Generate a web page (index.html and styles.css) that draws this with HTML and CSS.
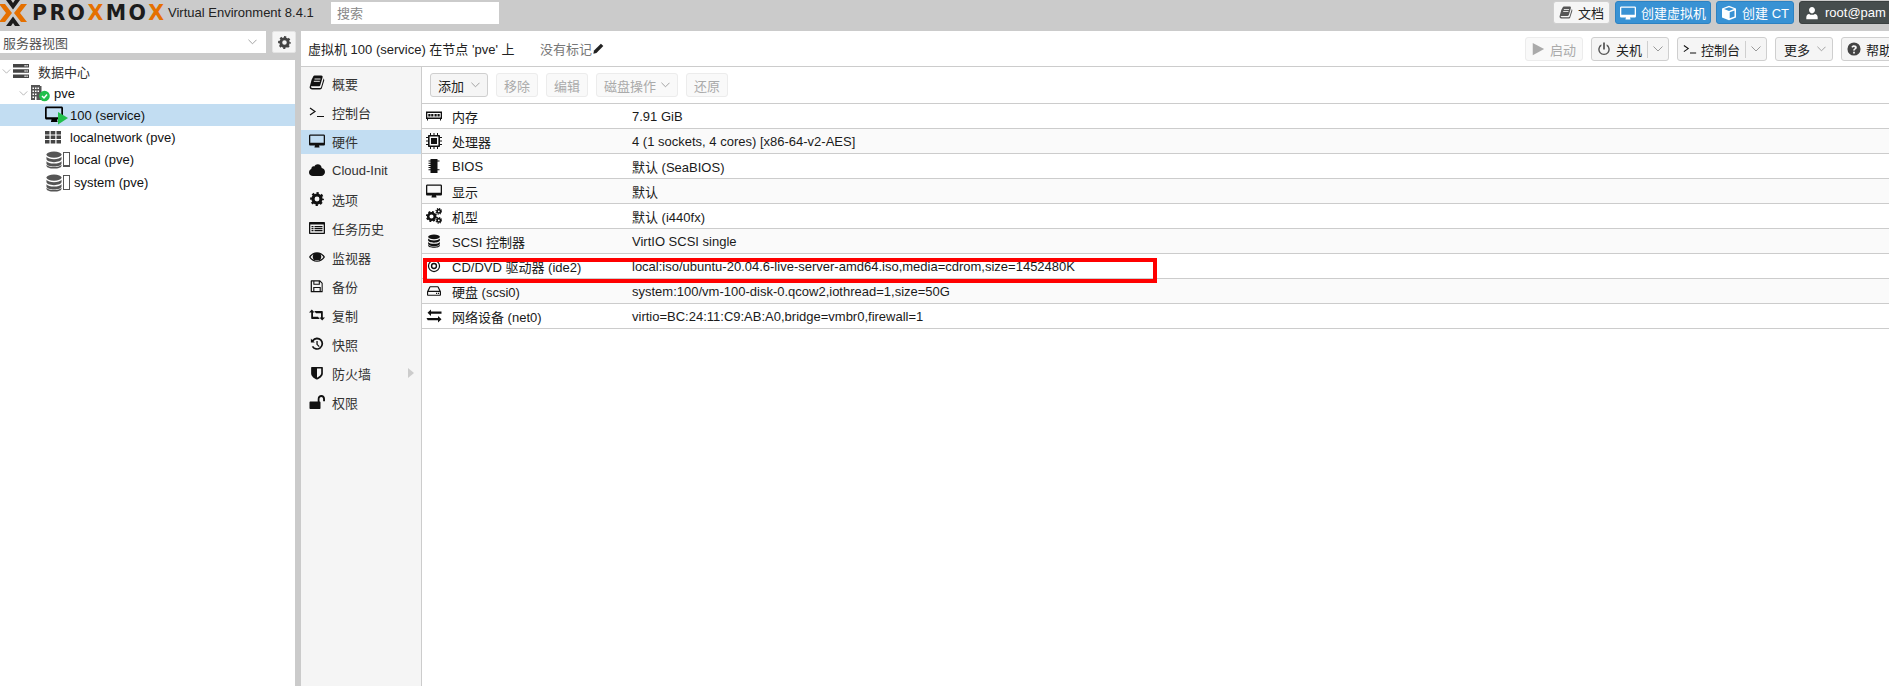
FILE: index.html
```html
<!DOCTYPE html>
<html lang="zh-CN">
<head>
<meta charset="utf-8">
<title>Proxmox VE</title>
<link rel="stylesheet" href="styles.css">
</head>
<body>
<svg class="defs" width="0" height="0">
  <symbol id="i-book" viewBox="0 0 16 16"><path d="M15 4.200c.3.4.3.9.2 1.400l-2.400 7.600c-.2.7-.9 1.200-1.700 1.200H3c-.9 0-1.900-.7-2.300-1.600-.1-.4-.1-.7 0-1 .2-1 1.300-4.800 1.700-6.400 0-.3.1-.5.2-.7L4.500 1.100C4.700.7 5.200.4 5.700.5L12.300.5c.5 0 .9.2 1.100.5.3.4.3.9.2 1.300l-2.200 7.500c-.4 1.200-.6 1.500-1.700 1.500H2.400c-.2 0-.3 0-.4.200-.1.100-.1.300 0 .5.2.6.8.9 1.300.9h7.900c.3 0 .7-.2.8-.5l2.500-8.300c.1-.2 0-.5 0-.7.2.1.4.2.5.3z"/><path d="M5.500 4h6M4.800 6.300h6" stroke="#fff" stroke-width=".9"/></symbol>
  <symbol id="i-term" viewBox="0 0 16 16"><path d="M1 4l5 3.500L1 11M8 12.500h7" fill="none" stroke="currentColor" stroke-width="1.200"/></symbol>
  <symbol id="i-desk" viewBox="0 0 16 16"><path d="M1.300 1.500h13.400c.7 0 1.300.6 1.300 1.300v8.400c0 .7-.6 1.300-1.300 1.300H10c0 .8.500 1 .5 1.500v.5H5.500V14c0-.5.500-.7.500-1.500H1.300c-.7 0-1.300-.6-1.300-1.300V2.800c0-.7.600-1.300 1.300-1.300zm0 1.300v7h13.400v-7z"/></symbol>
  <symbol id="i-cloud" viewBox="0 0 16 16"><path d="M4 14c-2.200 0-4-1.600-4-3.600 0-1.500 1-2.800 2.300-3.300C2.300 4.900 4 3.800 5.300 4.500 6 3 7.400 2.300 8.700 2.300c2.200 0 3.900 1.700 4 3.800 1.900.4 3.300 1.900 3.300 3.900 0 2.200-1.800 4-4 4z"/></symbol>
  <symbol id="i-cog" viewBox="0 0 16 16"><circle cx="8" cy="8" r="4.600" fill="none" stroke="currentColor" stroke-width="3.600"/><circle cx="8" cy="8" r="6.600" fill="none" stroke="currentColor" stroke-width="2.600" stroke-dasharray="2.600 2.580" stroke-dashoffset="1.300"/></symbol>
  <symbol id="i-list" viewBox="0 0 16 16"><path fill-rule="evenodd" d="M1 2h14c.6 0 1 .4 1 1v10c0 .6-.4 1-1 1H1c-.6 0-1-.4-1-1V3c0-.6.4-1 1-1zm.3 2.500v8.200h13.400V4.500z"/><path d="M2.500 6h2v1.200h-2zM5.500 6h8v1.200h-8zM2.500 8h2v1.200h-2zM5.500 8h8v1.200h-8zM2.500 10h2v1.200h-2zM5.500 10h8v1.200h-8z"/></symbol>
  <symbol id="i-eye" viewBox="0 0 16 16"><path fill-rule="evenodd" d="M0 8c1.700-3 4.600-4.800 8-4.800s6.300 1.800 8 4.800c-1.700 3-4.600 4.800-8 4.800S1.700 11 0 8zm1.500 0C3 10.200 5.300 11.600 8 11.600s5-1.400 6.500-3.600c-.8-1.200-1.800-2.100-3-2.800.5.700.8 1.600.8 2.600 0 2.400-1.900 4.300-4.300 4.300S3.700 10.200 3.700 7.800c0-1 .3-1.900.8-2.600-1.200.7-2.200 1.600-3 2.800z"/></symbol>
  <symbol id="i-save" viewBox="0 0 16 16"><path fill-rule="evenodd" d="M1.500 1.500h10l3 3v10c0 .4-.3.700-.7.700H1.500c-.4 0-.7-.3-.7-.7V2.200c0-.4.3-.7.7-.7zM2.200 2.800v11h1.500V9h8.600v4.800h1V5l-2-2v3.700H3.800V2.800zm2.800 0v2.700h5V2.800zm0 7.500v3.500h6v-3.500z"/></symbol>
  <symbol id="i-retweet" viewBox="0 0 16 16"><path d="M0 5.500L2.800 2.500 5.600 5.500H4v4.200h5l1.800 2.300H2.900c-.3 0-.7-.3-.7-.7V5.500zM16 10.500l-2.800 3-2.800-3H12V6.300H7L5.200 4h7.900c.3 0 .7.300.7.700v5.800z"/></symbol>
  <symbol id="i-hist" viewBox="0 0 16 16"><path d="M2.500 3.300A7 7 0 1 1 2 11.200l1.700-1A5 5 0 1 0 4 4.800L5.500 6.300H1V1.800z"/><path d="M7.300 4.500h1.500v3.700l2.300 2.300-1 1-2.800-2.800z"/></symbol>
  <symbol id="i-shield" viewBox="0 0 16 16"><path fill-rule="evenodd" d="M2 1h12c.4 0 .7.300.7.700V8.500c0 3.200-3.500 5.700-6.700 7-3.200-1.300-6.700-3.800-6.700-7V1.700c0-.4.300-.7.700-.7zm6 1.800v10.500c2.200-1 4.800-2.800 4.800-4.900V2.800z"/></symbol>
  <symbol id="i-unlock" viewBox="0 0 16 16"><path d="M1.500 7.500h7.200V5c0-2.400 1.700-4 3.700-4s3.600 1.600 3.600 4v2.200h-1.900V5c0-1.200-.8-2.100-1.800-2.100s-1.800.9-1.800 2.100v2.500c.6 0 1 .4 1 1V14c0 .6-.4 1-1 1H1.500c-.6 0-1-.4-1-1V8.500c0-.6.400-1 1-1z"/></symbol>
  <symbol id="i-mem" viewBox="0 0 16 16"><path fill-rule="evenodd" d="M0 3.500h16v7.500h-1v1.500h-1V11H2v1.500H1V11H0zM1.300 5v4.500h13.400V5z"/><path d="M2.300 6h2.200v2.500H2.300zM5.200 6h2.200v2.500H5.200zM8.500 6h2.200v2.500H8.500zM11.500 6h2.200v2.500h-2.200z"/></symbol>
  <symbol id="i-cpu" viewBox="0 0 16 16"><path fill-rule="evenodd" d="M3 2h10c.6 0 1 .4 1 1v10c0 .6-.4 1-1 1H3c-.6 0-1-.4-1-1V3c0-.6.400-1 1-1zm.6 1.600v8.800h8.800V3.600z"/><path d="M5 5h6v6H5zM4 0h1v2H4zM7.500 0h1v2h-1zM11 0h1v2h-1zM4 14h1v2H4zM7.500 14h1v2h-1zM11 14h1v2h-1zM0 4h2v1H0zM0 7.500h2v1H0zM0 11h2v1H0zM14 4h2v1h-2zM14 7.500h2v1h-2zM14 11h2v1h-2z"/></symbol>
  <symbol id="i-chip" viewBox="0 0 16 16"><path d="M4.500 1h7v14h-7zM2.500 2.500h2v1h-2zM2.500 4.700h2v1h-2zM2.500 6.900h2v1h-2zM2.500 9.100h2v1h-2zM2.500 11.300h2v1h-2zM11.500 2.500h2v1h-2zM11.500 11.300h2v1h-2z"/></symbol>
  <symbol id="i-cogs" viewBox="0 0 16 16"><circle cx="5.500" cy="8.500" r="3.300" fill="none" stroke="currentColor" stroke-width="2.500"/><circle cx="5.500" cy="8.500" r="4.700" fill="none" stroke="currentColor" stroke-width="1.800" stroke-dasharray="1.900 1.790"/><circle cx="12.800" cy="3.300" r="1.700" fill="none" stroke="currentColor" stroke-width="1.600"/><circle cx="12.800" cy="3.300" r="2.800" fill="none" stroke="currentColor" stroke-width="1.200" stroke-dasharray="1.100 1.100"/><circle cx="12.800" cy="12.300" r="1.700" fill="none" stroke="currentColor" stroke-width="1.600"/><circle cx="12.800" cy="12.300" r="2.800" fill="none" stroke="currentColor" stroke-width="1.200" stroke-dasharray="1.100 1.100"/></symbol>
  <symbol id="i-db" viewBox="0 0 16 16"><ellipse cx="8" cy="3.200" rx="6.700" ry="2.700"/><path d="M1.300 5.200v2c0 1.500 3 2.700 6.700 2.700s6.700-1.200 6.700-2.700v-2c-1 1.500-3.500 2.100-6.700 2.100S2.300 6.700 1.300 5.200zM1.300 9v2c0 1.500 3 2.700 6.700 2.700s6.700-1.200 6.700-2.700V9c-1 1.500-3.500 2.100-6.700 2.100S2.300 10.500 1.300 9z"/><path d="M1.300 12.200v.8c0 1.500 3 2.600 6.700 2.600s6.700-1.100 6.700-2.600v-.8c-1 1.400-3.500 2.100-6.700 2.100s-5.700-.7-6.700-2.100z"/></symbol>
  <symbol id="i-cd" viewBox="0 0 16 16"><circle cx="8" cy="8" r="6.300" fill="none" stroke="currentColor" stroke-width="1.400"/><circle cx="8" cy="8" r="2.800" fill="none" stroke="currentColor" stroke-width="1.600"/></symbol>
  <symbol id="i-hdd" viewBox="0 0 16 16"><path fill-rule="evenodd" d="M3.700 2.500h8.600c.4 0 .8.200 1 .6l2.500 5.200c.1.200.2.400.2.600v3.300c0 .7-.6 1.300-1.300 1.300H1.300c-.7 0-1.300-.6-1.300-1.300V8.900c0-.2.100-.4.200-.6l2.500-5.200c.2-.4.600-.6 1-.6zm.2 1.300L2 7.700h12l-1.900-3.900zM1.300 9v3.200h13.400V9z"/><path d="M10.300 10h1.300v1.300h-1.300zM12.500 10h1.300v1.300h-1.300z"/></symbol>
  <symbol id="i-swap" viewBox="0 0 16 16"><path d="M0 10h11.500V8L15 11.200 11.500 14.500v-2.200H1.200zM15 3.500v2.300H4.500V8L1 4.800 4.500 1.500v2z" transform="translate(.5 0)"/></symbol>
  <symbol id="i-user" viewBox="0 0 16 16"><path d="M8 1c2 0 3.400 1.700 3.400 3.700S10 8.500 8 8.500 4.600 6.700 4.600 4.700 6 1 8 1zM1.500 15v-2.200c0-2 1.300-3.600 3.200-3.800.9.600 2 1 3.300 1s2.400-.4 3.300-1c1.900.2 3.200 1.800 3.200 3.800V15z"/></symbol>
  <symbol id="i-cube" viewBox="0 0 16 16"><path d="M8 .8l7 2.700v9L8 15.300l-7-2.800v-9zM3 4l5 2 5-2-5-1.800zM8.700 7.300v6l4.800-1.900V5.400z"/></symbol>
  <symbol id="i-play" viewBox="0 0 16 16"><path d="M2 1l13 7-13 7z"/></symbol>
  <symbol id="i-power" viewBox="0 0 16 16"><path d="M5 2.500v2a5 5 0 1 0 6 0v-2a6.600 6.600 0 1 1-6 0z"/><path d="M7 .5h2v8H7z"/></symbol>
  <symbol id="i-help" viewBox="0 0 16 16"><path fill-rule="evenodd" d="M8 .5a7.500 7.500 0 1 1 0 15 7.500 7.500 0 0 1 0-15zM7 11v2h2v-2zM5 5.800l1.400.9C6.700 6 7.200 5.600 7.900 5.600c.6 0 1.100.4 1.100.9 0 .5-.3.800-.9 1.100-.7.400-1.100 1-1.100 1.800v.4h2v-.3c0-.4.200-.6.700-.9.800-.4 1.500-1.100 1.500-2.200C11.200 4.700 9.700 3.700 8 3.700c-1.400 0-2.400.7-3 2.100z"/></symbol>
  <symbol id="i-pencil" viewBox="0 0 16 16"><path d="M11.500 1l3.500 3.500L5 14.500 0.500 15.500 1.500 11z"/></symbol>
  <symbol id="i-servers" viewBox="0 0 16 16"><path fill-rule="evenodd" d="M0 1h16v3.600H0zM0 6.200h16v3.600H0zM0 11.400h16V15H0z"/><path fill="#fff" d="M11.500 2h1.200v1.400h-1.200zM13.500 2h1.200v1.400h-1.200zM11.500 7.300h1.200v1.400h-1.200zM13.500 7.300h1.200v1.400h-1.200zM11.500 12.500h1.200v1.400h-1.200zM13.500 12.500h1.200v1.400h-1.200z"/></symbol>
  <symbol id="i-th" viewBox="0 0 16 16"><path d="M0 2h4.500v3.400H0zM5.700 2h4.600v3.400H5.700zM11.500 2H16v3.400h-4.500zM0 6.500h4.500v3.400H0zM5.700 6.500h4.600v3.400H5.700zM11.500 6.500H16v3.400h-4.500zM0 11h4.500v3.400H0zM5.700 11h4.600v3.400H5.700zM11.500 11H16v3.400h-4.500z"/></symbol>
  <symbol id="i-chev" viewBox="0 0 10 6"><path d="M.5.500L5 5 9.500.5" fill="none" stroke="currentColor" stroke-width="1"/></symbol>
</svg>

<div class="app">
  <header class="topbar">
    <div class="logo">
      <svg class="logo-mark" viewBox="0 0 28 26" width="28" height="26"><path fill="#e57000" d="M0 4h6l7 9-7 9H0l7-9zM28 4h-6l-7 9 7 9h6l-7-9z"/><path fill="#1c1c1c" d="M7 0h5l2 3 2-3h5l-7 9.500zM7 26h5l2-3 2 3h5l-7-9.500z"/></svg>
      <span class="logo-text">PRO<b>X</b>MO<b>X</b></span>
    </div>
    <span class="version">Virtual Environment 8.4.1</span>
    <input class="search" type="text" placeholder="搜索">
    <div class="top-tools">
      <button class="btn top-btn"><svg class="ico dim"><use href="#i-book"/></svg>文档</button>
      <button class="btn top-btn blue"><svg class="ico"><use href="#i-desk"/></svg>创建虚拟机</button>
      <button class="btn top-btn blue"><svg class="ico"><use href="#i-cube"/></svg>创建 CT</button>
      <button class="btn top-btn dark"><svg class="ico"><use href="#i-user"/></svg>root@pam</button>
    </div>
  </header>

  <div class="main">
    <aside class="side">
      <div class="view-row">
        <div class="combo"><span>服务器视图</span><svg class="chev"><use href="#i-chev"/></svg></div>
        <button class="gear-btn"><svg class="ico"><use href="#i-cog"/></svg></button>
      </div>
      <div class="tree">
        <div class="tree-row l0"><svg class="chev tw"><use href="#i-chev"/></svg><svg class="ico srv"><use href="#i-servers"/></svg><span class="dc-label">数据中心</span></div>
        <div class="tree-row l1"><svg class="chev tw"><use href="#i-chev"/></svg>
          <svg class="node-ico" viewBox="0 0 20 18" width="20" height="18"><path fill="#555" d="M1 1h9v1h1.500v14H1z"/><path fill="#fff" d="M2.500 3.500h1.500v1.500H2.500zM5 3.500h1.500v1.500H5zM7.500 3.500H9v1.500H7.500zM2.500 6.500h1.500V8H2.500zM5 6.500h1.500V8H5zM7.500 6.500H9V8H7.500zM2.500 9.500h1.500V11H2.500zM5 9.500h1.500V11H5zM2.500 12.500h1.500V14H2.500zM5 12.500h1.500V16H5z"/><circle cx="14.500" cy="12" r="5.300" fill="#21bf4b"/><path d="M12 12l2 2 3-3.500" fill="none" stroke="#fff" stroke-width="1.500"/></svg>
          <span class="node-label">pve</span></div>
        <div class="tree-row l2 selected">
          <svg class="vm-ico" viewBox="0 0 24 20" width="24" height="20"><path fill-rule="evenodd" d="M1.500 1.500h15c.8 0 1.500.7 1.500 1.500v10c0 .8-.7 1.500-1.500 1.500H12c0 1 .5 1 .5 2v.5H6v-.5c0-1 .5-1 .5-2h-5C.700 14.500 0 13.800 0 13V3c0-.8.700-1.500 1.500-1.500zm.2 1.700v9h14.600v-9z"/><path fill="#21bf4b" d="M13 7l10 6-10 6.500z"/></svg>
          <span>100 (service)</span></div>
        <div class="tree-row l2"><svg class="ico th"><use href="#i-th"/></svg><span class="net-label">localnetwork (pve)</span></div>
        <div class="tree-row l2 tall"><svg class="ico db"><use href="#i-db"/></svg><span class="gauge low"></span><span>local (pve)</span></div>
        <div class="tree-row l2 tall"><svg class="ico db"><use href="#i-db"/></svg><span class="gauge"></span><span>system (pve)</span></div>
      </div>
    </aside>

    <section class="panel">
      <div class="panel-head">
        <span class="title">虚拟机 100 (service) 在节点 'pve' 上</span>
        <span class="tags">没有标记<svg class="pencil"><use href="#i-pencil"/></svg></span>
        <div class="head-tools">
          <button class="btn off start"><svg class="ico"><use href="#i-play"/></svg>启动</button>
          <button class="btn"><svg class="ico power"><use href="#i-power"/></svg>关机<span class="split"></span><svg class="chev"><use href="#i-chev"/></svg></button>
          <button class="btn console"><svg class="ico"><use href="#i-term"/></svg>控制台<span class="split"></span><svg class="chev"><use href="#i-chev"/></svg></button>
          <button class="btn more">更多<svg class="chev after"><use href="#i-chev"/></svg></button>
          <button class="btn"><svg class="ico help"><use href="#i-help"/></svg>帮助</button>
        </div>
      </div>
      <div class="panel-body">
        <nav class="nav">
          <a class="nav-item"><svg class="ico"><use href="#i-book"/></svg>概要</a>
          <a class="nav-item"><svg class="ico"><use href="#i-term"/></svg>控制台</a>
          <a class="nav-item active"><svg class="ico"><use href="#i-desk"/></svg>硬件</a>
          <a class="nav-item"><svg class="ico"><use href="#i-cloud"/></svg>Cloud-Init</a>
          <a class="nav-item"><svg class="ico small"><use href="#i-cog"/></svg>选项</a>
          <a class="nav-item"><svg class="ico"><use href="#i-list"/></svg>任务历史</a>
          <a class="nav-item"><svg class="ico"><use href="#i-eye"/></svg>监视器</a>
          <a class="nav-item"><svg class="ico small"><use href="#i-save"/></svg>备份</a>
          <a class="nav-item"><svg class="ico"><use href="#i-retweet"/></svg>复制</a>
          <a class="nav-item"><svg class="ico small"><use href="#i-hist"/></svg>快照</a>
          <a class="nav-item"><svg class="ico small"><use href="#i-shield"/></svg>防火墙<span class="nav-arrow"></span></a>
          <a class="nav-item"><svg class="ico"><use href="#i-unlock"/></svg>权限</a>
        </nav>
        <div class="content">
          <div class="toolbar">
            <button class="btn">添加<svg class="chev after"><use href="#i-chev"/></svg></button>
            <button class="btn off">移除</button>
            <button class="btn off">编辑</button>
            <button class="btn off">磁盘操作<svg class="chev after tight"><use href="#i-chev"/></svg></button>
            <button class="btn off">还原</button>
          </div>
          <div class="grid">
            <div class="row"><svg class="ico"><use href="#i-mem"/></svg><span>内存</span><span>7.91 GiB</span></div>
            <div class="row"><svg class="ico"><use href="#i-cpu"/></svg><span>处理器</span><span>4 (1 sockets, 4 cores) [x86-64-v2-AES]</span></div>
            <div class="row"><svg class="ico"><use href="#i-chip"/></svg><span>BIOS</span><span>默认 (SeaBIOS)</span></div>
            <div class="row"><svg class="ico"><use href="#i-desk"/></svg><span>显示</span><span>默认</span></div>
            <div class="row"><svg class="ico"><use href="#i-cogs"/></svg><span>机型</span><span>默认 (i440fx)</span></div>
            <div class="row"><svg class="ico small"><use href="#i-db"/></svg><span>SCSI 控制器</span><span>VirtIO SCSI single</span></div>
            <div class="row"><svg class="ico small"><use href="#i-cd"/></svg><span>CD/DVD 驱动器 (ide2)</span><span>local:iso/ubuntu-20.04.6-live-server-amd64.iso,media=cdrom,size=1452480K</span></div>
            <div class="row"><svg class="ico small"><use href="#i-hdd"/></svg><span>硬盘 (scsi0)</span><span>system:100/vm-100-disk-0.qcow2,iothread=1,size=50G</span></div>
            <div class="row"><svg class="ico"><use href="#i-swap"/></svg><span>网络设备 (net0)</span><span>virtio=BC:24:11:C9:AB:A0,bridge=vmbr0,firewall=1</span></div>
            <div class="callout"></div>
          </div>
        </div>
      </div>
    </section>
  </div>
</div>
</body>
</html>
```

FILE: styles.css
```css
* { box-sizing: border-box; }
html, body { margin: 0; height: 100%; overflow: hidden; }
body {
  background: #cbcbcb;
  color: #111;
  font: 13px "Liberation Sans", "Noto Sans CJK SC", sans-serif;
}
.defs { position: absolute; }
.app { display: flex; flex-direction: column; height: 686px; width: 1889px; overflow: hidden; }

.ico { width: 16px; height: 16px; flex: none; fill: currentColor; color: #111; }
.ico.small { width: 14px; height: 14px; margin: 0 1px; }
.chev { width: 9px; height: 6px; flex: none; color: #999; }

/* top bar */
.topbar { height: 31px; display: flex; align-items: flex-start; flex: none; }
.logo { width: 165px; height: 26px; display: flex; align-items: center; flex: none; }
.logo-mark { margin-left: -1px; flex: none; }
.logo-text {
  font: bold 20.5px "DejaVu Sans", sans-serif;
  letter-spacing: 2.4px;
  margin-left: 5px;
  color: #1c1c1c;
  white-space: nowrap;
}
.logo-text b { color: #e57000; }
.version { margin: 5px 0 0 3px; color: #222; width: 163px; flex: none; font-size: 13px; line-height: 16px; }
.search {
  width: 168px; height: 22px; margin-top: 2px; border: 0; padding: 0 6px;
  font: inherit; background: #fff; flex: none;
}
.search::placeholder { color: #888; opacity: 1; }
.top-tools { margin-left: auto; display: flex; gap: 5px; margin-top: 1px; margin-right: -12px; }

.btn {
  display: inline-flex; align-items: center; height: 24px; padding: 0 7px;
  background: #f5f5f5; border: 1px solid #cfcfcf; border-radius: 3px;
  font: inherit; color: #222; white-space: nowrap;
}
.btn .ico { margin-right: 5px; width: 14px; height: 14px; }
.btn.off { background: #f9f9f9; border-color: #ececec; color: #aaa; }
.btn.off .ico { color: #aaa; }
.btn .after { margin-left: 7px; }
.btn .after.tight { margin-left: 5px; }
.btn .split { width: 1px; height: 17px; background: #cfcfcf; margin: 0 5px; }
.btn .power { color: #555; }
.btn .help { color: #444; }

.top-btn { height: 23px; padding: 0 5px; }
.top-btn .dim { color: #555; }
.top-btn.blue { background: #3892d4; border-color: #2d82c2; color: #fff; padding: 0 4px; }
.top-btn.blue .ico { color: #fff; width: 16px; height: 16px; }
.top-btn.dark { background: #464d4d; border-color: #3a4040; color: #fff; width: 102px; }
.top-btn.dark .ico { color: #fff; margin-right: 6px; }

/* layout */
.main { flex: 1; display: flex; gap: 5px; min-height: 0; }
.side { width: 296px; flex: none; display: flex; flex-direction: column; }
.view-row { display: flex; height: 22px; gap: 6px; margin-bottom: 7px; flex: none; }
.combo {
  width: 266px; background: #fff; display: flex; align-items: center;
  justify-content: space-between; padding: 0 9px 0 3px; color: #555;
}
.gear-btn {
  width: 24px; padding: 0; background: #f5f5f5; border: 1px solid #e4e4e4; border-radius: 2px;
  display: flex; align-items: center; justify-content: center;
}
.gear-btn .ico { width: 13px; height: 13px; color: #444; }

/* tree */
.tree { flex: 1; background: #fff; width: 295px; }
.tree-row { height: 22px; display: flex; align-items: center; white-space: nowrap; }
.tree-row.tall { height: 23px; }
.tree-row.selected { background: #c2ddf2; }
.tree-row.l0 { padding-left: 2px; }
.tree-row.l1 { padding-left: 19px; }
.tree-row.l2 { padding-left: 45px; }
.tw { width: 9px; height: 5px; color: #aaa; }
.srv { margin-left: 2px; color: #444; }
.dc-label { margin-left: 9px; color: #333; }
.node-ico { margin-left: 2px; flex: none; }
.node-label { margin-left: 4px; }
.vm-ico { flex: none; margin-right: 1px; }
.th { color: #444; }
.net-label { margin-left: 9px; }
.db { color: #555; width: 18px; height: 18px; }
.gauge { width: 7px; height: 15px; border: 1px solid #555; margin: 0 4px 0 0; flex: none; background: #fff; }
.gauge.low { border-bottom-width: 2px; }

/* panel */
.panel { flex: 1; background: #fff; display: flex; flex-direction: column; min-width: 0; overflow: hidden; }
.panel-head {
  height: 36px; flex: none; border-bottom: 1px solid #ccc; display: flex; align-items: center;
  padding-left: 7px;
}
.title { color: #222; width: 232px; flex: none; }
.tags { color: #777; display: flex; align-items: center; }
.pencil { width: 11px; height: 11px; margin-left: 1px; fill: #222; }
.head-tools { margin-left: auto; display: flex; gap: 8px; margin-right: -9px; padding-top: 1px; }
.head-tools .btn { padding: 0 5px; }
.head-tools .btn.start { padding: 0 6px 0 5px; }
.head-tools .btn.more { padding: 0 6px 0 8px; }
.head-tools .chev { width: 10px; }
.head-tools .more .chev { width: 9px; }
.head-tools .console .ico { margin-right: 4px; }

.panel-body { flex: 1; display: flex; min-height: 0; }
.nav { width: 121px; flex: none; background: #f5f5f5; border-right: 1px solid #ccc; padding-top: 5px; display: flex; flex-direction: column; gap: 5px; }
.nav-item { height: 24px; display: flex; align-items: center; gap: 7px; padding: 0 0 2px 8px; color: #333; flex: none; }
.nav-item.active { background: #c2ddf2; }
.nav-arrow {
  margin-left: 30px; width: 0; height: 0;
  border-left: 6px solid #ccc; border-top: 5px solid transparent; border-bottom: 5px solid transparent;
}

.content { flex: 1; min-width: 0; }
.toolbar { height: 37px; border-bottom: 1px solid #ccc; display: flex; align-items: center; gap: 8px; padding-left: 8px; }
.grid { position: relative; }
.row {
  height: 25px; border-bottom: 1px solid #ccc; display: grid;
  grid-template-columns: 26px 180px 1fr; align-items: center; padding-left: 4px; color: #1a1a1a;
}
.row:nth-child(even) { background: #fafafa; }
.callout {
  position: absolute; left: 1px; top: 154px; width: 734px; height: 25px;
  border: 4px solid #f00;
}
```
